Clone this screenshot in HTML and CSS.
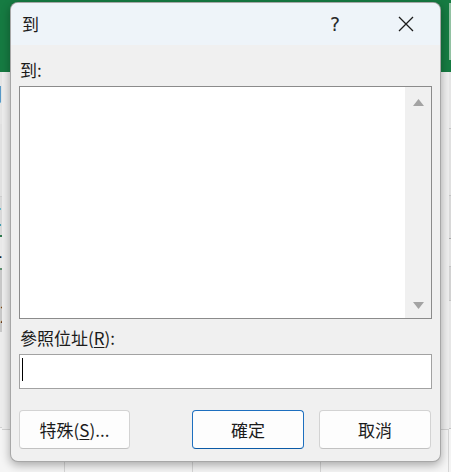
FILE: index.html
```html
<!DOCTYPE html>
<html lang="zh-Hant">
<head>
<meta charset="utf-8">
<title>到</title>
<link rel="stylesheet" href="styles.css">
</head>
<body>
<div class="excel">
  <div class="side side-left">
    <div class="l-green"></div>
    <div class="l-ribbon"><span class="cut cut-kai">開</span></div>
    <div class="l-gray"></div>
    <div class="l-head"><span class="cut cut-e">E</span></div>
    <div class="l-cell"><span class="cut cut-n">4</span></div>
    <div class="l-sel"><span class="cut cut-n">2</span></div>
    <div class="l-light"></div>
    <div class="l-rest"></div>
  </div>
  <div class="center">
    <div class="c-green"></div>
    <div class="c-body"></div>
    <div class="c-grid"><span></span><span></span><span></span><span></span></div>
  </div>
  <div class="side side-right">
    <div class="r-dark-top"></div>
    <div class="r-light-green"></div>
    <div class="r-green"></div>
    <div class="r-row r1"></div>
    <div class="r-row r2"></div>
    <div class="r-row r3"></div>
    <div class="r-row r4"></div>
    <div class="r-row r5"></div>
    <div class="r-row r6"></div>
    <div class="r-rest"></div>
  </div>
</div>

<div class="dialog">
  <div class="titlebar">
    <span class="title">到</span>
    <span class="tb-help">?</span>
    <span class="tb-close">
      <svg width="16" height="16" viewBox="0 0 16 16"><path d="M1 1 L15 15 M15 1 L1 15" stroke="#1b1b1b" stroke-width="1.3" fill="none"/></svg>
    </span>
  </div>
  <div class="content">
    <div class="label">到:</div>
    <div class="listbox">
      <div class="list-area"></div>
      <div class="scrollbar">
        <svg width="11" height="7" viewBox="0 0 11 7"><path d="M5.5 0 L11 7 L0 7 Z" fill="#a3a3a3"/></svg>
        <svg width="11" height="7" viewBox="0 0 11 7"><path d="M0 0 L11 0 L5.5 7 Z" fill="#a3a3a3"/></svg>
      </div>
    </div>
    <div class="label label-ref">參照位址(<u>R</u>):</div>
    <div class="input"><span class="caret"></span></div>
    <div class="buttons">
      <div class="btn btn-special">特殊(<u>S</u>)...</div>
      <div class="btn btn-ok">確定</div>
      <div class="btn btn-cancel">取消</div>
    </div>
  </div>
</div>
</body>
</html>
```
FILE: styles.css
```css
html, body {
  margin: 0;
  padding: 0;
}
body {
  width: 451px;
  height: 472px;
  overflow: hidden;
  font-family: "Noto Sans CJK TC", "Noto Sans", sans-serif;
  color: #1b1b1b;
  background: #f2f2f2;
}

/* ---------- Excel background ---------- */
.excel {
  display: flex;
  height: 472px;
}
.side {
  width: 10px;
  display: flex;
  flex-direction: column;
  overflow: hidden;
}
.center {
  flex: 1;
  display: flex;
  flex-direction: column;
}
.cut {
  display: block;
  white-space: nowrap;
  text-align: right;
  direction: rtl;
}

.l-green { height: 72px; background: #167b42; }
.l-ribbon { height: 52px; background: #e6e6e6; }
.cut-kai { font-size: 19px; line-height: 20px; margin-top: 12px; color: #2a2a2a; }
.l-gray { height: 72px; background: #e2e2e2; border-bottom: 1px solid #cfcfcf; }
.l-head { height: 38px; background: #dadada; border-bottom: 2px solid #2f7a4d; }
.cut-e { font-size: 24px; line-height: 38px; color: #2f7a4d; }
.l-cell { height: 31px; background: #eaeaea; border-bottom: 2px solid #5e8f6f; }
.cut-n { font-size: 24px; line-height: 31px; color: #222; }
.l-sel { height: 62px; background: #c9c9c9; display: flex; align-items: flex-end; }
.l-sel .cut-n { line-height: 26px; margin-bottom: 6px; }
.l-light { height: 95px; background: #ededed; border-bottom: 1px solid #d2d2d2; }
.l-rest { flex: 1; background: #f5f5f5; }

.c-green { height: 72px; background: #167b42; }
.c-body { flex: 1; background: #efefef; }
.c-grid {
  height: 42px;
  display: flex;
  background: #f5f5f5;
  border-top: 1px solid #d2d2d2;
}
.c-grid span {
  width: 127px;
  flex: none;
  border-right: 1px solid #d6d6d6;
}
.c-grid span:first-child { width: 62px; }

.r-dark-top { height: 3px; background: #167b42; }
.r-light-green { height: 57px; background: #93c2a3; }
.r-green { height: 12px; background: #167b42; }
.r-row { border-bottom: 1px solid #c4c4c4; }
.r1 { height: 56px; background: #e6e6e6; }
.r2 { height: 66px; background: #e1e1e1; }
.r3 { height: 42px; background: #d9d9d9; border-bottom-color: #a9a9a9; }
.r4 { height: 27px; background: #e3e3e3; }
.r5 { height: 33px; background: #d3d3d3; }
.r6 { height: 127px; background: #e7e7e7; }
.r-rest { flex: 1; background: #f4f4f4; }

/* ---------- Dialog (floats over the sheet) ---------- */
.dialog {
  position: absolute;
  left: 10px;
  top: 2px;
  width: 431px;
  height: 460px;
  box-sizing: border-box;
  border: 1px solid rgba(0, 0, 0, 0.3);
  border-radius: 8px;
  background: #f0f0f0;
  box-shadow: 0 3px 10px rgba(0, 0, 0, 0.32);
  overflow: hidden;
  display: flex;
  flex-direction: column;
}
.titlebar {
  height: 42px;
  flex: none;
  display: flex;
  align-items: center;
  padding: 0 11px;
  background: #eef4f9;
  font-size: 17px;
}
.title {
  flex: 1;
  line-height: 24px;
}
.tb-help {
  width: 46px;
  text-align: center;
  font-family: "DejaVu Sans", sans-serif;
  font-size: 19px;
  font-weight: 400;
  line-height: 24px;
  margin-right: 25px;
  color: #2a2a2a;
}
.tb-close {
  width: 46px;
  display: flex;
  justify-content: center;
  align-items: center;
}

.content {
  flex: 1;
  display: flex;
  flex-direction: column;
  padding: 13px 8px 12px 8px;
  font-size: 17px;
}
.label {
  height: 24px;
  line-height: 24px;
  padding-left: 1px;
  margin-bottom: 4px;
}
.label-ref {
  margin-top: 7px;
}
.label u, .btn u {
  text-underline-offset: 2px;
  text-decoration-thickness: 1px;
}

.listbox {
  height: 233px;
  box-sizing: border-box;
  border: 1px solid #8b8b8b;
  background: #ffffff;
  display: flex;
}
.list-area {
  flex: 1;
}
.scrollbar {
  width: 26px;
  background: #f0f0f0;
  display: flex;
  flex-direction: column;
  align-items: center;
  justify-content: space-between;
  padding: 12px 0 9px;
  box-sizing: border-box;
}

.input {
  height: 35px;
  box-sizing: border-box;
  border: 1px solid #a2a2a2;
  background: #ffffff;
  display: flex;
  align-items: center;
}
.caret {
  width: 1px;
  height: 23px;
  background: #000;
  margin-left: 2px;
  margin-bottom: 4px;
}

.buttons {
  margin-top: 21px;
  display: flex;
  gap: 15px;
}
.btn {
  height: 39px;
  box-sizing: border-box;
  border: 1px solid #d3d3d3;
  border-bottom-color: #c2c2c2;
  border-radius: 4px;
  background: #fdfdfd;
  display: flex;
  align-items: center;
  justify-content: center;
  line-height: 24px;
}
.btn-special { width: 111px; }
.btn-ok {
  width: 112px;
  margin-left: auto;
  border-color: #1d6fbf;
  border-bottom-color: #0b5aa6;
}
.btn-cancel { width: 112px; margin-right: 1px; }
```
